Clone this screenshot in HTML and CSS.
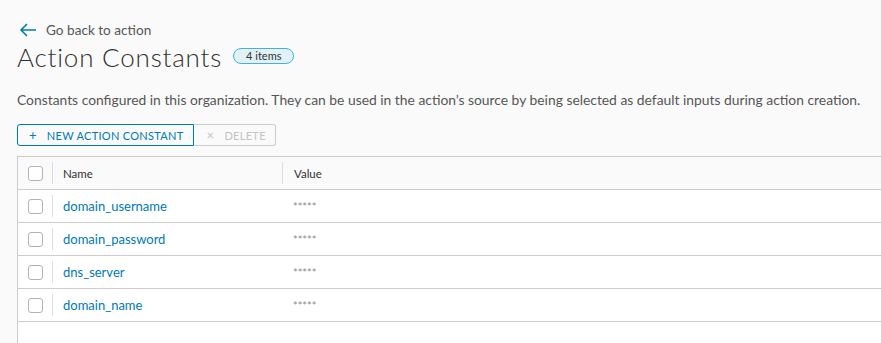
FILE: index.html
```html
<!DOCTYPE html>
<html lang="en">
<head>
    <meta charset="UTF-8">
    <title>Action Constants</title>
    <link rel="stylesheet" href="styles.css">
</head>
<body>

    <div class="page">
        <a class="back-link" href="#">
            <svg width="18" height="16" viewBox="0 0 18 16">
                <path d="M8 2 L2 8 L8 14 M2 8 H17" fill="none" stroke="#0079b8" stroke-width="1.6" stroke-linejoin="round"/>
            </svg>
            <span>Go back to action</span>
        </a>

        <div class="title-row">
            <h1>Action Constants</h1>
            <span class="badge">4 items</span>
        </div>

        <p class="description">Constants configured in this organization. They can be used in the action’s source by being selected as default inputs during action creation.</p>

        <div class="btn-group">
            <button class="btn btn-primary">
                <span class="btn-icon">+</span>NEW ACTION CONSTANT
            </button>
            <button class="btn btn-disabled">
                <span class="btn-icon">×</span>DELETE
            </button>
        </div>

        <div class="datagrid">
            <div class="grid-row grid-head">
                <div class="cell cell-check"><span class="checkbox"></span></div>
                <div class="cell cell-name">Name</div>
                <div class="cell cell-value">Value</div>
            </div>
            <div class="grid-row">
                <div class="cell cell-check"><span class="checkbox"></span></div>
                <div class="cell cell-name"><a href="#">domain_username</a></div>
                <div class="cell cell-value">*****</div>
            </div>
            <div class="grid-row">
                <div class="cell cell-check"><span class="checkbox"></span></div>
                <div class="cell cell-name"><a href="#">domain_password</a></div>
                <div class="cell cell-value">*****</div>
            </div>
            <div class="grid-row">
                <div class="cell cell-check"><span class="checkbox"></span></div>
                <div class="cell cell-name"><a href="#">dns_server</a></div>
                <div class="cell cell-value">*****</div>
            </div>
            <div class="grid-row">
                <div class="cell cell-check"><span class="checkbox"></span></div>
                <div class="cell cell-name"><a href="#">domain_name</a></div>
                <div class="cell cell-value">*****</div>
            </div>
        </div>
    </div>

</body>
</html>
```

FILE: styles.css
```css
body {
    font-family: Lato, "Noto Sans", sans-serif;
    background-color: #fafafa;
    color: #565656;
    margin: 0;
    overflow: hidden;
    height: 343px;
}
.page {
    padding: 21px 0 0 17px;
    width: 900px;
}
.back-link {
    display: flex;
    align-items: center;
    gap: 9px;
    color: #565656;
    text-decoration: none;
    font-size: 13.6px;
    margin-left: 2px;
    height: 18px;
}
.title-row {
    display: flex;
    align-items: center;
    gap: 11px;
    margin-top: 3px;
    height: 30px;
}
h1 {
    margin: 0;
    font-size: 26px;
    line-height: 30px;
    font-weight: 300;
    letter-spacing: 0.8px;
    color: #313131;
}
.badge {
    font-size: 11px;
    color: #313131;
    background-color: #e1f1f6;
    border: 1px solid #49afd9;
    border-radius: 10px;
    padding: 0 12px;
    line-height: 14px;
    margin-top: -3px;
}
.description {
    font-size: 13.85px;
    margin: 19px 0 0 0;
    line-height: 18px;
}
.btn-group {
    display: flex;
    margin-top: 15px;
}
.btn {
    font-family: inherit;
    font-size: 11px;
    letter-spacing: 0.3px;
    height: 22px;
    padding: 0 9px 0 11px;
    background: none;
    border: 1px solid #ccc;
}
.btn-primary {
    color: #0079b8;
    border-color: #0079b8;
    border-radius: 3px 0 0 3px;
}
.btn-disabled {
    color: #c4c4c4;
    border-left: none;
    border-radius: 0 3px 3px 0;
    padding-left: 13px;
}
.btn-icon {
    font-size: 13px;
    margin-right: 10px;
}
.datagrid {
    margin-top: 10px;
    border: 1px solid #ccc;
    border-right: none;
    background-color: #fff;
    height: 200px;
}
.grid-row {
    display: flex;
    height: 32px;
    align-items: center;
    border-bottom: 1px solid #ccc;
}
.grid-head {
    background-color: #fafafa;
    color: #313131;
}
.cell {
    display: flex;
    align-items: center;
    height: 22px;
}
.cell-check {
    width: 34px;
    justify-content: center;
    border-right: 1px solid #ddd;
}
.cell-name {
    width: 219px;
    padding-left: 10px;
    border-right: 1px solid #ddd;
    font-size: 11.5px;
}
.grid-row:not(.grid-head) .cell-name {
    border-right: none;
}
.cell-value {
    padding-left: 11px;
    font-size: 11px;
    color: #8c8c8c;
}
.grid-head .cell-value {
    font-size: 11.5px;
    color: #313131;
}
.cell-name a {
    color: #0079b8;
    text-decoration: none;
    font-size: 13px;
}
.checkbox {
    width: 13px;
    height: 13px;
    border: 1px solid #b3b3b3;
    border-radius: 3px;
    background-color: #fff;
}
```
